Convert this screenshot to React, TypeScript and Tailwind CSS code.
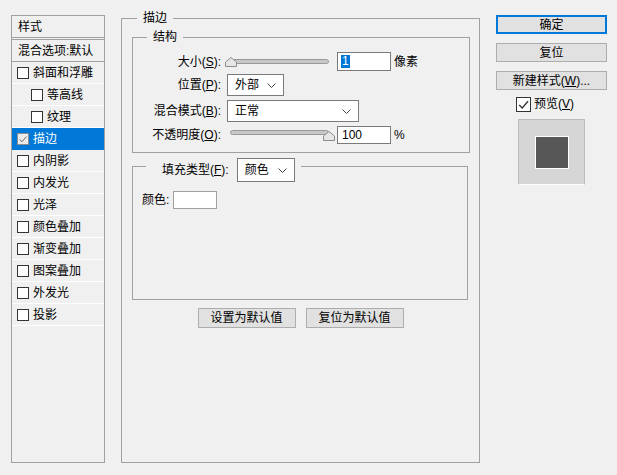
import React from 'react';

const font = "font-['Liberation_Sans','Noto_Sans_CJK_SC',sans-serif]";

const Check = ({ className = '' }: { className?: string }) => (
  <svg viewBox="0 0 12 12" className={className} fill="none">
    <polyline points="2,6.5 4.8,9.2 10.2,3" stroke="currentColor" strokeWidth="1.2" />
  </svg>
);

const Chevron = () => (
  <svg width="9" height="5" viewBox="0 0 9 5" fill="none">
    <polyline points="0.5,0.5 4.5,4.5 8.5,0.5" stroke="#444" strokeWidth="1" />
  </svg>
);

const Thumb = () => (
  <svg width="12" height="10" viewBox="0 0 12 10">
    <polygon points="6,0.5 11.5,5 11.5,9.5 0.5,9.5 0.5,5" fill="#e6e6e6" stroke="#8c8c8c" strokeWidth="1" />
  </svg>
);

type Row = { label: string; indent?: boolean; checked?: boolean; selected?: boolean };

const rows: Row[] = [
  { label: '斜面和浮雕' },
  { label: '等高线', indent: true },
  { label: '纹理', indent: true },
  { label: '描边', checked: true, selected: true },
  { label: '内阴影' },
  { label: '内发光' },
  { label: '光泽' },
  { label: '颜色叠加' },
  { label: '渐变叠加' },
  { label: '图案叠加' },
  { label: '外发光' },
  { label: '投影' },
];

const StyleList = () => (
  <div className="mt-[15px] w-[94px] h-[448px] border border-[#a0a0a0] flex flex-col">
    <div className="h-[22px] border-b border-[#a0a0a0] pl-[6px] flex items-center">样式</div>
    <div className="mt-[1px] h-[23px] border-t border-b border-[#a0a0a0] pl-[6px] flex items-center whitespace-nowrap">
      混合选项:默认
    </div>
    {rows.map((r) => (
      <div
        key={r.label}
        className={`h-[22px] border-b flex items-center ${r.indent ? 'pl-[19px]' : 'pl-[5px]'} ${
          r.selected ? 'bg-[#0078d7] border-[#0078d7] text-white' : 'border-white'
        }`}
      >
        <span
          className={`w-[12px] h-[12px] border flex items-center justify-center ${
            r.selected ? 'bg-[#ececec] border-[#8c8c8c] text-[#666]' : 'bg-white border-[#333]'
          }`}
        >
          {r.checked && <Check className="w-[10px] h-[10px]" />}
        </span>
        <span className="ml-[4px]">{r.label}</span>
      </div>
    ))}
  </div>
);

const Mn = ({ k }: { k: string }) => (
  <>
    (<span className="underline">{k}</span>)
  </>
);

const Slider = ({ value }: { value: 'min' | 'max' }) => (
  <div className="ml-[5px] w-[105px] h-[18px] relative">
    <div className={`absolute left-[4px] w-[99px] h-[5px] rounded-full bg-[#c8c8c8] border border-[#999] ${value === 'min' ? 'top-[6px]' : 'top-[4px]'}`} />
    <div className={`absolute ${value === 'min' ? 'left-[-1px] top-[4px]' : 'left-[97px] top-[5px]'}`}>
      <Thumb />
    </div>
  </div>
);

const Select = ({ text, w, h }: { text: string; w: string; h: string }) => (
  <div className={`ml-[6px] ${w} ${h} bg-white border border-[#7a7a7a] flex items-center justify-between pl-[7px] pr-[7px]`}>
    <span>{text}</span>
    <Chevron />
  </div>
);

const Label = ({ children }: { children: React.ReactNode }) => (
  <div className="w-[88px] text-right whitespace-nowrap">{children}</div>
);

const StrokePanel = () => (
  <div className="ml-[16px] mt-[18px] w-[359px] h-[445px] border border-[#a0a0a0] flex flex-col">
    <div className="-mt-[8px] ml-[15px] px-[6px] w-fit bg-[#f0f0f0] h-[14px]">描边</div>

    <div className="mt-[12px] ml-[10px] w-[338px] border border-[#a0a0a0] flex flex-col pb-[8px]">
      <div className="-mt-[8px] ml-[14px] px-[6px] w-fit bg-[#f0f0f0] h-[14px]">结构</div>

      <div className="mt-[8px] h-[19px] flex items-center">
        <Label>
          大小<Mn k="S" />:
        </Label>
        <Slider value="min" />
        <div className="ml-[6px] w-[54px] h-[19px] bg-white border border-[#7a7a7a] flex items-center pl-[3px]">
          <span className="bg-[#0078d7] text-white px-[1px] leading-[13px]">1</span>
        </div>
        <span className="ml-[3px]">像素</span>
      </div>

      <div className="mt-[3px] h-[22px] flex items-center">
        <Label>
          位置<Mn k="P" />:
        </Label>
        <Select text="外部" w="w-[57px]" h="h-[22px]" />
      </div>

      <div className="mt-[4px] h-[22px] flex items-center">
        <Label>
          混合模式<Mn k="B" />:
        </Label>
        <Select text="正常" w="w-[132px]" h="h-[22px]" />
      </div>

      <div className="mt-[4px] h-[18px] flex items-center">
        <Label>
          不透明度<Mn k="O" />:
        </Label>
        <Slider value="max" />
        <div className="ml-[6px] w-[54px] h-[18px] bg-white border border-[#7a7a7a] flex items-center pl-[4px]">
          100
        </div>
        <span className="ml-[3px]">%</span>
      </div>
    </div>

    <div className="mt-[13px] ml-[10px] w-[336px] h-[134px] border border-[#a0a0a0] flex flex-col">
      <div className="-mt-[9px] ml-[13px] pr-[6px] w-fit h-[24px] bg-[#f0f0f0] flex items-center">
        <span className="pl-[16px] whitespace-nowrap">
          填充类型<Mn k="F" />:
        </span>
        <Select text="颜色" w="w-[58px] ml-[8px]" h="h-[24px]" />
      </div>
      <div className="mt-[9px] ml-[9px] flex items-center">
        <span>颜色:</span>
        <div className="ml-[4px] w-[44px] h-[18px] bg-white border border-[#a0a0a0]" />
      </div>
    </div>

    <div className="mt-[8px] flex justify-center gap-[10px]">
      <button className="w-[98px] h-[20px] bg-[#e1e1e1] border border-[#adadad]">设置为默认值</button>
      <button className="w-[98px] h-[20px] bg-[#e1e1e1] border border-[#adadad]">复位为默认值</button>
    </div>
  </div>
);

const SidePanel = () => (
  <div className="ml-[16px] w-[111px] flex flex-col">
    <button className="mt-[15px] h-[19px] bg-[#e1e1e1] border-2 border-[#0078d7] leading-[14px]">确定</button>
    <button className="mt-[9px] h-[19px] bg-[#e1e1e1] border border-[#adadad] leading-[14px]">复位</button>
    <button className="mt-[9px] h-[19px] bg-[#e1e1e1] border border-[#adadad] leading-[14px] whitespace-nowrap">
      新建样式<Mn k="W" />...
    </button>
    <div className="mt-[6px] ml-[20px] flex items-center h-[16px]">
      <span className="w-[15px] h-[15px] bg-white border border-[#333] flex items-center justify-center text-[#333]">
        <Check className="w-[13px] h-[13px]" />
      </span>
      <span className="ml-[3px]">
        预览<Mn k="V" />
      </span>
    </div>
    <div className="mt-[7px] ml-[22px] w-[67px] h-[66px] bg-[#d6d6d6] border border-[#bcbcbc] border-b-white flex items-center justify-center">
      <div className="w-[34px] h-[33px] bg-[#575757] border border-white" />
    </div>
  </div>
);

export default function App() {
  return (
    <div className={`w-[617px] h-[475px] bg-[#f0f0f0] text-black text-[12px] leading-[14px] ${font} flex items-start pl-[11px] overflow-hidden`}>
      <StyleList />
      <StrokePanel />
      <SidePanel />
    </div>
  );
}
